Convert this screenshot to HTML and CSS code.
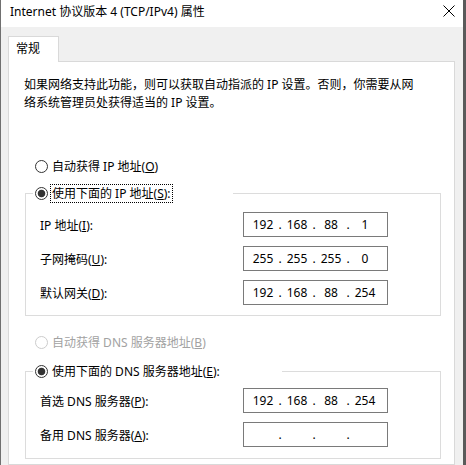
FILE: index.html
```html
<!DOCTYPE html>
<html lang="zh-CN">
<head>
  <meta charset="UTF-8">
  <title>Internet 协议版本 4 (TCP/IPv4) 属性</title>
  <link rel="stylesheet" href="styles.css">
</head>
<body>

  <div class="window">
    <div class="titlebar">
      <span class="title">Internet 协议版本 4 (TCP/IPv4) 属性</span>
      <svg class="close" width="12" height="12" viewBox="0 0 12 12">
        <path d="M0.5 0.5 L11.5 11.5 M11.5 0.5 L0.5 11.5" stroke="#000" stroke-width="1" fill="none"/>
      </svg>
    </div>

    <div class="client">
      <div class="tabs">
        <div class="tab">常规</div>
      </div>

      <div class="panel">
        <p class="intro">如果网络支持此功能，则可以获取自动指派的 IP 设置。否则，你需要从网<br>络系统管理员处获得适当的 IP 设置。</p>

        <label class="radio-row radio-first">
          <input type="radio" name="ip">
          <span class="radio-text">自动获得 IP 地址(<u>O</u>)</span>
        </label>

        <fieldset class="group group-ip">
          <legend class="legend legend-ip">
            <label class="radio-row">
              <input type="radio" name="ip" checked>
              <span class="focus">使用下面的 IP 地址(<u>S</u>):</span>
            </label>
          </legend>

          <div class="field-row">
            <span>IP 地址(<u>I</u>):</span>
            <div class="ip-box"><span>192</span><i>.</i><span>168</span><i>.</i><span>88</span><i>.</i><span>1</span></div>
          </div>
          <div class="field-row">
            <span>子网掩码(<u>U</u>):</span>
            <div class="ip-box"><span>255</span><i>.</i><span>255</span><i>.</i><span>255</span><i>.</i><span>0</span></div>
          </div>
          <div class="field-row">
            <span>默认网关(<u>D</u>):</span>
            <div class="ip-box"><span>192</span><i>.</i><span>168</span><i>.</i><span>88</span><i>.</i><span>254</span></div>
          </div>
        </fieldset>

        <label class="radio-row radio-dns disabled">
          <input type="radio" name="dns" disabled>
          <span class="radio-text">自动获得 DNS 服务器地址(<u>B</u>)</span>
        </label>

        <fieldset class="group group-dns">
          <legend class="legend legend-dns">
            <label class="radio-row">
              <input type="radio" name="dns" checked>
              <span class="plain">使用下面的 DNS 服务器地址(<u>E</u>):</span>
            </label>
          </legend>

          <div class="field-row">
            <span>首选 DNS 服务器(<u>P</u>):</span>
            <div class="ip-box"><span>192</span><i>.</i><span>168</span><i>.</i><span>88</span><i>.</i><span>254</span></div>
          </div>
          <div class="field-row">
            <span>备用 DNS 服务器(<u>A</u>):</span>
            <div class="ip-box"><span></span><i>.</i><span></span><i>.</i><span></span><i>.</i><span></span></div>
          </div>
        </fieldset>
      </div>
    </div>
  </div>

</body>
</html>
```

FILE: styles.css
```css
/* Reset */
* {
  margin: 0;
  padding: 0;
  box-sizing: border-box;
}

body {
  width: 466px;
  height: 465px;
  overflow: hidden;
  background: #6a6a6a;
  font-family: "Noto Sans", "Noto Sans CJK SC", sans-serif;
  font-size: 12px;
  color: #000;
}

/* Dialog frame */
.window {
  width: 466px;
  height: 465px;
  display: flex;
  flex-direction: column;
  background: #f0f0f0;
  border-left: 1px solid #707070;
  border-right: 3px solid #5a5a5a;
}

.titlebar {
  height: 27px;
  display: flex;
  align-items: center;
  justify-content: space-between;
  padding: 0 8px 3px 9px;
  background: #fff;
  line-height: 16px;
}

.close {
  margin-bottom: 3px;
}

/* Client area with tab control */
.client {
  flex: 1;
  display: flex;
  flex-direction: column;
  padding: 9px 8px 0 7px;
}

.tabs {
  display: flex;
}

.tab {
  position: relative;
  z-index: 1;
  height: 26px;
  margin-bottom: -1px;
  padding: 0 18px 0 7px;
  line-height: 23px;
  background: #fff;
  border: 1px solid #d9d9d9;
  border-bottom: none;
}

.panel {
  flex: 1;
  background: #fff;
  border: 1px solid #d9d9d9;
  padding: 14px 13px 0 15px;
}

.intro {
  line-height: 18px;
}

/* Radio buttons */
.radio-row {
  display: flex;
  align-items: center;
  height: 20px;
  padding-left: 11px;
  line-height: 17px;
  white-space: nowrap;
}

.radio-row input {
  appearance: none;
  -webkit-appearance: none;
  width: 13px;
  height: 13px;
  margin: 0;
  border: 1px solid #333;
  border-radius: 50%;
  background: #fff;
  flex: none;
}

.radio-row input:checked {
  background: radial-gradient(circle, #333 0 3.4px, #fff 4.2px);
}

.radio-text {
  margin-left: 4px;
}

.radio-first {
  margin-top: 44px;
}

.radio-dns {
  margin-top: 16px;
}

.disabled {
  color: #a2a2a2;
}

.disabled input {
  border-color: #cccccc;
}

.focus {
  margin-left: 2px;
  padding: 0 1px;
  border: 1px dotted #000;
}

.plain {
  margin-left: 4px;
}

/* Group boxes */
.group {
  margin: 7px 0 0 1px;
  border: 1px solid #dcdcdc;
  padding: 9px 13px 10px 7px;
}

.group-dns {
  margin-top: 9px;
  padding: 7px 13px 11px 7px;
}

.legend {
  padding: 0;
}

.legend .radio-row {
  padding-left: 2px;
  background: #fff;
}

.legend-ip {
  width: 200px;
}

.legend-dns {
  width: 249px;
}

.field-row {
  display: grid;
  grid-template-columns: 203px 145px;
  align-items: center;
  height: 25px;
  padding-left: 7px;
  white-space: nowrap;
}

.field-row + .field-row {
  margin-top: 9px;
}

/* IP address control */
.ip-box {
  display: flex;
  align-items: center;
  height: 25px;
  padding-left: 5px;
  border: 1px solid #7a7a7a;
  background: #fff;
  line-height: 23px;
}

.ip-box span {
  width: 28px;
  text-align: center;
}

.ip-box i {
  width: 6px;
  font-style: normal;
  text-align: center;
}
```
